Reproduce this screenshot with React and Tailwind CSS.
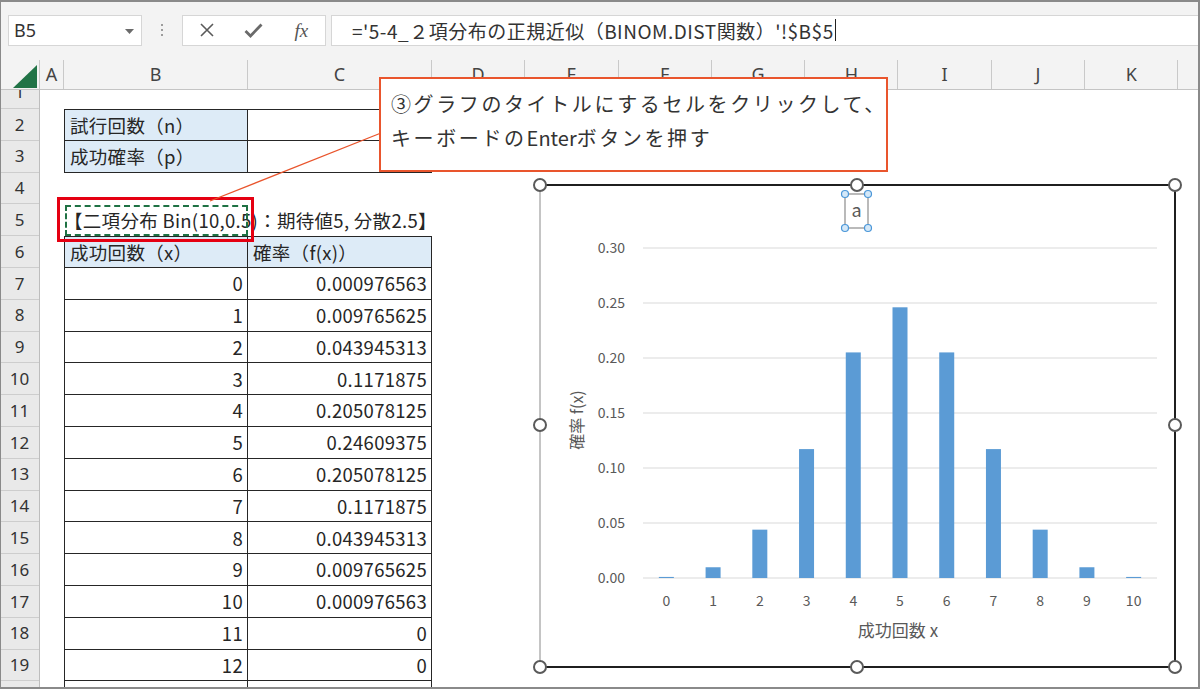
import React from 'react';

const probs = [0.000976563, 0.009765625, 0.043945313, 0.1171875, 0.205078125, 0.24609375, 0.205078125, 0.1171875, 0.043945313, 0.009765625, 0.000976563];

const dataRows = [
  ['0', '0.000976563'], ['1', '0.009765625'], ['2', '0.043945313'], ['3', '0.1171875'],
  ['4', '0.205078125'], ['5', '0.24609375'], ['6', '0.205078125'], ['7', '0.1171875'],
  ['8', '0.043945313'], ['9', '0.009765625'], ['10', '0.000976563'], ['11', '0'], ['12', '0'],
];

const cols = ['D', 'E', 'F', 'G', 'H', 'I', 'J', 'K'];

function Toolbar() {
  return (
    <div className="flex items-center h-[60px] bg-[#f3f3f3]">
      <div className="ml-[8px] w-[134px] h-[31px] bg-white border border-[#d6d6d6] flex items-center pl-[5px] relative shrink-0">
        <span className="text-[18px] text-[#333] font-['Noto_Sans',sans-serif] leading-none">B5</span>
        <svg className="absolute left-[116px] top-[13px]" width="9" height="5" viewBox="0 0 9 5">
          <path d="M0 0 L9 0 L4.5 5 Z" fill="#6b6b6b" />
        </svg>
      </div>
      <div className="w-[40px] shrink-0 flex flex-col items-center justify-center gap-[3px]">
        <div className="w-[2px] h-[2px] bg-[#9c9c9c]" />
        <div className="w-[2px] h-[2px] bg-[#9c9c9c]" />
        <div className="w-[2px] h-[2px] bg-[#9c9c9c]" />
      </div>
      <div className="w-[144px] h-[31px] bg-white border border-[#d6d6d6] flex items-center shrink-0">
        <div className="w-[48px] flex justify-center">
          <svg width="16" height="16" viewBox="0 0 16 16">
            <path d="M2 2 L14 14 M14 2 L2 14" stroke="#5a5a5a" strokeWidth="1.6" fill="none" />
          </svg>
        </div>
        <div className="w-[48px] flex justify-center">
          <svg width="19" height="15" viewBox="0 0 19 15">
            <path d="M1.5 8 L6.5 13 L17.5 1.5" stroke="#6a6a6a" strokeWidth="2.8" fill="none" />
          </svg>
        </div>
        <div className="w-[48px] flex justify-center">
          <span className="font-['Liberation_Serif',serif] italic text-[19px] text-[#555] leading-none">fx</span>
        </div>
      </div>
      <div className="ml-[5px] flex-1 h-[31px] bg-white border border-[#d6d6d6] flex items-center pl-[20px] overflow-hidden relative">
        <span className="font-['Noto_Sans_CJK_JP',sans-serif] text-[19px] tracking-[0.5px] text-[#333] whitespace-nowrap leading-none">
          ='5-4_２項分布の正規近似（BINOM.DIST関数）'!$B$5
        </span>
        <div className="w-[1px] h-[22px] bg-[#222] ml-[1px]" />
      </div>
    </div>
  );
}

function HeaderRow() {
  const hc = "flex items-center justify-center border-r border-[#c9c9c9] text-[18px] text-[#444] font-['Noto_Sans',sans-serif] shrink-0";
  return (
    <div className="flex h-[30px] bg-[#f3f3f3] border-b border-[#c4c4c4]">
      <div className="w-[40px] shrink-0 border-r border-[#c9c9c9] relative">
        <svg className="absolute left-[13px] top-[5px]" width="24" height="23" viewBox="0 0 24 23">
          <path d="M0 23 L24 23 L24 0 Z" fill="#217346" />
        </svg>
      </div>
      <div className={`${hc} w-[24px]`}>A</div>
      <div className={`${hc} w-[184px]`}>B</div>
      <div className={`${hc} w-[184px]`}>C</div>
      {cols.map((c) => (
        <div key={c} className={`${hc} w-[93.3px]`}>{c}</div>
      ))}
      <div className="flex-1" />
    </div>
  );
}

const bd = 'border-[#262626]';
const cellText = "font-['Noto_Sans_CJK_JP',sans-serif] text-[18.5px] tracking-[0.3px] text-[#262626] whitespace-nowrap leading-none";

function BCell({ children, blue, top, right }) {
  return (
    <div className={`w-[184px] shrink-0 border-l border-r border-b ${bd} ${top ? 'border-t' : ''} ${blue ? 'bg-[#ddebf7]' : 'bg-white'} flex items-center ${right ? 'justify-end pr-[4px]' : 'pl-[5px]'}`}>
      <span className={cellText}>{children}</span>
    </div>
  );
}

function CCell({ children, blue, top, right }) {
  return (
    <div className={`w-[184px] shrink-0 border-r border-b ${bd} ${top ? 'border-t' : ''} ${blue ? 'bg-[#ddebf7]' : 'bg-white'} flex items-center ${right ? 'justify-end pr-[4px]' : 'pl-[5px]'}`}>
      <span className={cellText}>{children}</span>
    </div>
  );
}

function Row({ children, h = 'h-[31.8px]' }) {
  return (
    <div className={`flex ${h}`}>
      <div className="w-[24px] shrink-0" />
      {children}
    </div>
  );
}

function RowHeaders() {
  const rc = "h-[31.8px] flex items-center justify-center border-b border-[#cdcdcd] text-[17px] text-[#333] font-['Noto_Sans',sans-serif]";
  const nums = [];
  for (let i = 2; i <= 20; i++) nums.push(i);
  return (
    <div className="w-[40px] shrink-0 bg-[#e9e9e9] border-r border-[#bdbdbd]">
      <div className="h-[19px] overflow-hidden flex flex-col justify-end border-b border-[#cdcdcd]">
        <div className="h-[31.8px] shrink-0 flex items-center justify-center text-[17px] text-[#333] font-['Noto_Sans',sans-serif]">1</div>
      </div>
      {nums.map((n) => (
        <div key={n} className={rc}>{n}</div>
      ))}
    </div>
  );
}

function Sheet() {
  return (
    <div className="flex-1 bg-white">
      <Row h="h-[19px]"><div /></Row>
      <Row>
        <BCell blue top>試行回数（n）</BCell>
        <CCell top />
      </Row>
      <Row>
        <BCell blue>成功確率（p）</BCell>
        <CCell />
      </Row>
      <Row><div /></Row>
      <Row>
        <div className="w-[184px] shrink-0 relative flex items-center">
          <span className={cellText}>【二項分布 Bin(10,0.5)：期待値5, 分散2.5】</span>
          <div className="absolute left-[1px] top-[1px] right-0 bottom-0 border-2 border-dashed border-[#1f7244]" />
        </div>
      </Row>
      <Row>
        <BCell blue top>成功回数（x）</BCell>
        <CCell blue top>確率（f(x)）</CCell>
      </Row>
      {dataRows.map(([x, p]) => (
        <Row key={x}>
          <BCell right>{x}</BCell>
          <CCell right>{p}</CCell>
        </Row>
      ))}
      <Row>
        <BCell right />
        <CCell right />
      </Row>
    </div>
  );
}

function Chart() {
  const x0 = 103;
  const x1 = 617;
  const base = 393;
  const step = (x1 - x0) / 11;
  const grid = [0, 1, 2, 3, 4, 5, 6];
  const handles = [[0, 0], [317, 0], [635, 0], [0, 240], [635, 240], [0, 482], [317, 482], [635, 482]];
  const font = "'Noto Sans CJK JP', 'Noto Sans', sans-serif";
  return (
    <div className="absolute left-[540px] top-[185px] w-[635px] h-[482px] bg-white">
      <svg width="635" height="482" viewBox="0 0 635 482" overflow="visible" className="overflow-visible">
        {grid.map((k) => (
          <g key={k}>
            <line x1={x0} x2={x1} y1={base - 55 * k} y2={base - 55 * k} stroke="#d9d9d9" strokeWidth="1" />
            <text x="85" y={base - 55 * k + 5} textAnchor="end" fontSize="14" fill="#595959" fontFamily={font}>
              {(0.05 * k).toFixed(2)}
            </text>
          </g>
        ))}
        {probs.map((p, i) => {
          const cx = x0 + step * (i + 0.5);
          const h = p * 1100;
          return (
            <g key={i}>
              <rect x={cx - 7.5} y={base - h} width="15" height={h} fill="#5b9bd5" />
              <text x={cx} y="421" textAnchor="middle" fontSize="14" fill="#595959" fontFamily={font}>{i}</text>
            </g>
          );
        })}
        <text x="358" y="452" textAnchor="middle" fontSize="17" fill="#595959" fontFamily={font}>成功回数 x</text>
        <text x="37" y="241" textAnchor="middle" fontSize="16" fill="#595959" fontFamily={font} transform="rotate(-90 37 235)">確率 f(x)</text>

        <line x1="0" y1="0" x2="0" y2="482" stroke="#8a8a8a" strokeWidth="1" />
        <line x1="0" y1="0" x2="635" y2="0" stroke="#1f1f1f" strokeWidth="2" />
        <line x1="635" y1="0" x2="635" y2="482" stroke="#1f1f1f" strokeWidth="2" />
        <line x1="0" y1="482" x2="635" y2="482" stroke="#1f1f1f" strokeWidth="2" />
        {handles.map(([hx, hy], i) => (
          <circle key={i} cx={hx} cy={hy} r="6" fill="#ffffff" stroke="#5a5a5a" strokeWidth="2" />
        ))}

        <rect x="305" y="9" width="23" height="34" fill="#ffffff" stroke="#8c8c8c" strokeWidth="1.2" />
        <text x="316.5" y="32" textAnchor="middle" fontSize="18" fill="#595959" fontFamily={font}>a</text>
        {[[305, 9], [328, 9], [305, 43], [328, 43]].map(([hx, hy], i) => (
          <circle key={i} cx={hx} cy={hy} r="3.5" fill="#d4e8f8" stroke="#4a96d8" strokeWidth="1.2" />
        ))}
      </svg>
    </div>
  );
}

export default function App() {
  return (
    <div className="relative w-[1200px] h-[689px] overflow-hidden bg-white">
      <Toolbar />
      <HeaderRow />
      <div className="flex">
        <RowHeaders />
        <Sheet />
      </div>

      {/* red highlight box */}
      <div className="absolute left-[57px] top-[197px] w-[197px] h-[45px] border-[3px] border-[#e50012] pointer-events-none" />

      {/* leader line */}
      <svg className="absolute left-0 top-0 pointer-events-none" width="400" height="220" viewBox="0 0 400 220">
        <line x1="381" y1="133" x2="210" y2="201" stroke="#e9552d" strokeWidth="1.3" />
      </svg>

      {/* callout */}
      <div className="absolute left-[379px] top-[77px] w-[509px] h-[95px] bg-white border-2 border-[#e9552d] pl-[10px] pt-[8px]">
        <div className="font-['Noto_Sans_CJK_JP',sans-serif] text-[20px] leading-[34px] tracking-[2.6px] text-[#333] whitespace-nowrap">
          ③グラフのタイトルにするセルをクリックして、
        </div>
        <div className="font-['Noto_Sans_CJK_JP',sans-serif] text-[20px] leading-[34px] tracking-[2.6px] text-[#333] whitespace-nowrap">
          キーボードの<span className="tracking-normal">Enter</span>ボタンを押す
        </div>
      </div>

      <Chart />

      {/* screenshot frame */}
      <div className="absolute inset-0 border-t-2 border-r-2 border-b-2 border-l border-[#8a8a8a] pointer-events-none" />
    </div>
  );
}
